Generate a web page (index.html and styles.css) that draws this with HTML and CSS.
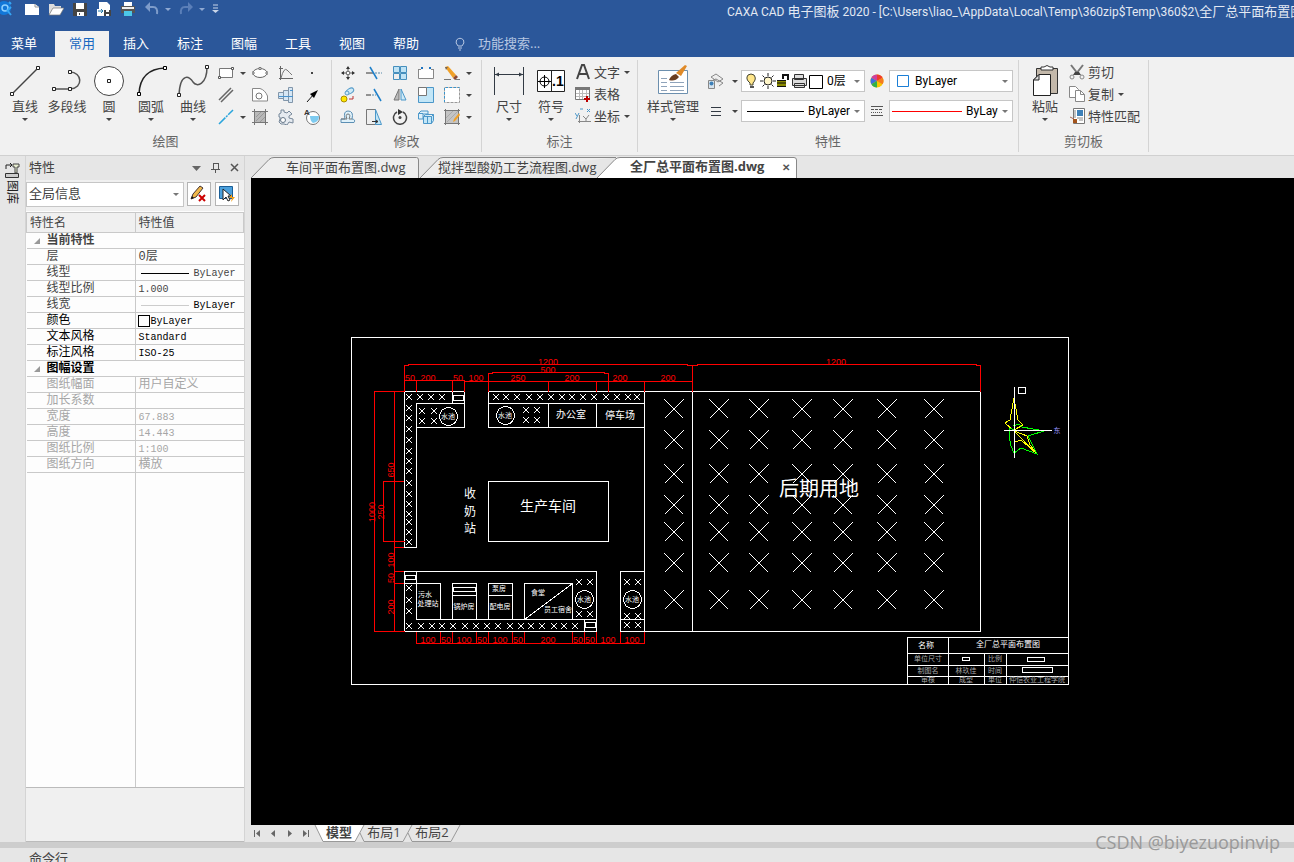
FILE: index.html
```html
<!DOCTYPE html>
<html lang="zh-CN">
<head>
    <meta charset="UTF-8">
    <meta name="viewport" content="width=device-width, initial-scale=1.0">
    <title>CAXA CAD 电子图板 2020</title>
    <link rel="stylesheet" href="styles.css">
</head>
<body>
    <header class="titlebar">
        <div class="title-row">
            <div class="quick">
                <svg class="logo" width="16" height="16" viewBox="0 0 16 16"><circle cx="4" cy="7" r="7" fill="#1277d8"/><circle cx="5" cy="7" r="3" fill="none" stroke="#8fd0ff" stroke-width="1.5"/><path d="M7 9l4 5M9 1l2 2M11 6l-3 3" stroke="#35a6f5" stroke-width="2"/></svg>
                <button class="q" aria-label="新建"><svg width="16" height="16"><path d="M1 3h10l4 3v8H1z" fill="#fff"/><path d="M11 3v3h4" fill="none" stroke="#999"/></svg></button>
                <button class="q" aria-label="打开"><svg width="16" height="16"><path d="M1 13V3h5l1 2h6v2" fill="#ddd"/><path d="M1 14l4-7h11l-4 7z" fill="#fff" stroke="#777" stroke-width=".7"/></svg></button>
                <button class="q" aria-label="保存"><svg width="16" height="16"><path d="M1 2h14v13H1z" fill="#444"/><path d="M4 2h8v6H4zM5 11h7v4H5z" fill="#fff"/><path d="M7 12h1v2H7z" fill="#444"/></svg></button>
                <button class="q" aria-label="另存为"><svg width="16" height="16"><path d="M3 1h8l3 3v11H1V8h2z" fill="#fff"/><path d="M2 10h5M5 8l2 2-2 2" stroke="#27a" fill="none"/><path d="M8 9h7v6H8z" fill="#444"/><path d="M10 9h3v2h-3zM10 13h3v2h-3z" fill="#fff"/></svg></button>
                <button class="q" aria-label="打印"><svg width="16" height="16"><path d="M4 1h8v4H4z" fill="#fff"/><path d="M1 5h14v7H1z" fill="#555"/><path d="M2 6h12v2H2z" fill="#eee"/><path d="M4 10h8v5H4z" fill="#4cc8e8"/></svg></button>
                <button class="q" aria-label="撤销"><svg width="16" height="16"><path d="M2 6h7q5 0 4 7" fill="none" stroke="#7e9cca" stroke-width="2"/><path d="M6 1v10L1 6z" fill="#7e9cca"/></svg></button>
                <i class="arrow pale"></i>
                <button class="q" aria-label="重做"><svg width="16" height="16"><path d="M14 6H7Q2 6 3 13" fill="none" stroke="#5b7fb8" stroke-width="2"/><path d="M10 1v10l5-5z" fill="#5b7fb8"/></svg></button>
                <i class="arrow pale"></i>
                <button class="more" aria-label="自定义"><svg width="8" height="10"><path d="M1 1h5M1 4h5" stroke="#c9d5e8"/><path d="M0 6h7L3.500 9z" fill="#c9d5e8"/></svg></button>
            </div>
            <div class="title">CAXA CAD <span>电子图板</span> 2020 - [C:\Users\liao_\AppData\Local\Temp\360zip$Temp\360$2\<span>全厂总平面布置图</span>.dwg]</div>
        </div>
        <nav class="menu">
            <button>菜单</button>
            <button class="active">常用</button>
            <button>插入</button>
            <button>标注</button>
            <button>图幅</button>
            <button>工具</button>
            <button>视图</button>
            <button>帮助</button>
            <label class="search">
                <svg width="12" height="14" viewBox="0 0 12 14"><path d="M4 9Q1 6 2.500 3Q6-.5 9.500 3Q11 6 8 9z" fill="none" stroke="#b7c7e2"/><path d="M4 11h4M5 13h2" stroke="#b7c7e2"/></svg>
                <input type="text" placeholder="功能搜索...">
            </label>
        </nav>
    </header>

    <div class="ribbon">
        <section class="group draw">
            <div class="tools">
                <button class="big"><svg width="32" height="34"><path d="M3 30L29 4" stroke="#444" stroke-width="1.500"/><path d="M1.500 28.500h3v3h-3zM27.500 2.500h3v3h-3z" fill="#fff" stroke="#222"/></svg>直线<i class="arrow"></i></button>
                <button class="big"><svg width="32" height="34"><path d="M3 25h16c14-1 12-17 0-17" fill="none" stroke="#555" stroke-width="1.500"/><path d="M1.500 23.500h3v3h-3zM17.500 23.500h3v3h-3zM17.500 6.500h3v3h-3z" fill="#fff" stroke="#222"/></svg>多段线</button>
                <button class="big"><svg width="32" height="34"><circle cx="16" cy="17" r="14.500" fill="#fff" stroke="#444"/><path d="M14.500 15.500h3v3h-3z" fill="#fff" stroke="#222"/></svg>圆<i class="arrow"></i></button>
                <button class="big"><svg width="32" height="34"><path d="M4 30Q5 5 30 4" fill="none" stroke="#222" stroke-width="1.500"/><path d="M2.500 28.500h3v3h-3zM28.500 2.500h3v3h-3z" fill="#fff" stroke="#000"/></svg>圆弧<i class="arrow"></i></button>
                <button class="big"><svg width="32" height="34"><path d="M2 31C3 8 13 12 16 18C20 24 30 20 30 3" fill="none" stroke="#555" stroke-width="1.500"/><path d="M.5 29.500h3v3h-3zM28.500 1.500h3v3h-3z" fill="#fff" stroke="#222"/></svg>曲线<i class="arrow"></i></button>
                <div class="icons draw-icons">
                    <span><button aria-label="矩形"><svg width="16" height="16"><path d="M1.500 3.500h13v9h-13z" fill="#fff" stroke="#777"/><path d="M.5 11.500h2v2h-2zM13.500 2.500h2v2h-2z" fill="#fff" stroke="#555"/></svg></button><i class="arrow"></i></span>
                    <span><button aria-label="椭圆"><svg width="16" height="16"><ellipse cx="8" cy="8" rx="7" ry="4.500" fill="#fff" stroke="#666"/><path d="M7 2.500h2v2H7zM0 7h2v2H0zM14 7h2v2h-2z" fill="#fff" stroke="#777"/></svg></button></span>
                    <span><button aria-label="公式曲线"><svg width="16" height="16"><path d="M2.500 1v14M1 13.500h14M1 3.500h4" stroke="#666" fill="none"/><path d="M3 13Q6 2 9 5T14 10" fill="none" stroke="#777"/></svg></button></span>
                    <span><button aria-label="点"><svg width="16" height="16"><path d="M7 7h2v2H7z" fill="#444"/></svg></button></span>
                    <span><button aria-label="平行线"><svg width="16" height="16"><path d="M1 13L13 1M3 15L15 3" stroke="#666" stroke-width="1.500"/></svg></button></span>
                    <span><button aria-label="轮廓"><svg width="16" height="16"><path d="M.5 1.500H8Q13 3 15.500 9v5H.5z" fill="#fff" stroke="#888"/><circle cx="7" cy="9" r="3" fill="#fff" stroke="#777"/></svg></button></span>
                    <span><button aria-label="轴"><svg width="16" height="16"><path d="M.5 5.500h5v6h-5zM5.500 3.500h5v10h-5zM10.500.500h4v15h-4z" fill="#d6e7f5" stroke="#8296aa"/><path d="M1 9.500h14M12 3.500h3" stroke="#4a93cd"/></svg></button></span>
                    <span><button aria-label="箭头"><svg width="16" height="16"><path d="M3 15l7-8" stroke="#111"/><path d="M14 3L6 7l4 4z" fill="#000"/></svg></button></span>
                    <span><button aria-label="中心线"><svg width="16" height="16"><path d="M1 15L15 1" stroke="#2aa5dc" stroke-width="1.500" stroke-dasharray="9 1 2 1"/></svg></button><i class="arrow"></i></span>
                    <span><button aria-label="填充"><svg width="16" height="16"><path d="M3 3h10v10H3z" fill="#b8b8b8"/><path d="M2.500 0v16M13.500 0v16M0 2.500h16M0 13.500h16" stroke="#777"/><path d="M4 8l5-5M4 12l9-9M8 13l5-5" stroke="#999"/></svg></button></span>
                    <span><button aria-label="齿轮"><svg width="16" height="16"><path d="M3 1h3v2l3 1 2-2 3 3-3 2v2l4 1v4l-4-1-2 3-3-1H3l-2-2 1-3V8H1V5l2-1z" fill="#e5eaf0" stroke="#77889a"/><circle cx="5" cy="11" r="2.500" fill="#fff" stroke="#678"/></svg></button></span>
                    <span><button aria-label="局部放大"><svg width="16" height="16"><circle cx="9" cy="9" r="6.500" fill="#fff" stroke="#777"/><path d="M6 7h9q0 6-6 7-3-2-3-7z" fill="#7ecbf0"/><text x="0" y="6" class="icon-a">A</text></svg></button></span>
                </div>
            </div>
            <h2>绘图</h2>
        </section>

        <section class="group modify">
            <div class="tools">
                <div class="icons modify-icons">
                    <span><button aria-label="平移"><svg width="16" height="16"><path d="M8 2v12M2 8h12" stroke="#555" stroke-dasharray="4 4"/><path d="M8 1l2 3H6zM8 15l2-3H6zM1 8l3-2v4zM15 8l-3-2v4z" fill="#333"/><path d="M6.500 6.500h3v3h-3z" fill="#fff" stroke="#777"/></svg></button></span>
                    <span><button aria-label="裁剪"><svg width="16" height="16"><path d="M0 8h7" stroke="#333"/><path d="M9 8h7" stroke="#58a" stroke-dasharray="2 1"/><path d="M4 2l7 12" stroke="#1d7fc9" stroke-width="1.500"/></svg></button></span>
                    <span><button aria-label="阵列"><svg width="16" height="16"><path d="M1.500 1.500h6v6h-6zM8.500 1.500h6v6h-6zM1.500 8.500h6v6h-6zM8.500 8.500h6v6h-6z" fill="#bfe3f5" stroke="#458fbd"/><path d="M2 9h5v5H2z" fill="#eee"/></svg></button></span>
                    <span><button aria-label="打断"><svg width="16" height="16"><path d="M.5 4.500v9h15v-9M0 4.500h3M13 4.500h3" fill="#fff" stroke="#888"/><path d="M3 2h2v2H3zM11 2h2v2h-2z" fill="#1c73c0"/></svg></button></span>
                    <span><button aria-label="删除"><svg width="16" height="16"><path d="M1 2l3-1 8 9-3 3z" fill="#f0a028"/><path d="M9 13l3-3 2 2-3 3z" fill="#8e4a32"/><path d="M1 2l1 3 2-3z" fill="#765"/><path d="M0 14.500h7M11 14.500h5" stroke="#777"/></svg></button><i class="arrow"></i></span>
                    <span><button aria-label="平移复制"><svg width="16" height="16"><circle cx="4" cy="12" r="3" fill="#ffe600" stroke="#a98d00"/><ellipse cx="10" cy="4" rx="4" ry="2.500" transform="rotate(-30 10 4)" fill="#cfeaf7" stroke="#579cc9"/><circle cx="7" cy="6" r="2" fill="#cfeaf7" stroke="#579cc9"/><path d="M9 12h4V9" fill="none" stroke="#b33"/></svg></button></span>
                    <span><button aria-label="延伸"><svg width="16" height="16"><path d="M0 8h5" stroke="#333"/><path d="M6 8h4" stroke="#58a" stroke-dasharray="2 1"/><path d="M8 2l7 12" stroke="#1d7fc9" stroke-width="1.500"/></svg></button></span>
                    <span><button aria-label="镜像"><svg width="16" height="16"><path d="M7 2v11H2z" fill="#bbb" stroke="#777"/><path d="M9 2v11h5z" fill="#cfeaf7" stroke="#4b97c9"/></svg></button></span>
                    <span><button aria-label="缩放"><svg width="16" height="16"><path d="M.5.5h15v15H.5z" fill="#c2e6f7" stroke="#4b97c9"/><path d="M.5.5h8v8h-8z" fill="#fff" stroke="#777"/></svg></button></span>
                    <span><button aria-label="拉伸"><svg width="16" height="16"><path d="M.5.500h15v15H.5z" fill="#fff" stroke="#999" stroke-dasharray="3 1"/><path d="M.5 15V.5h15" fill="none" stroke="#3695cf" stroke-dasharray="2 2"/></svg></button><i class="arrow"></i></span>
                    <span><button aria-label="等距线"><svg width="16" height="16"><path d="M1 13.500h13q2-3-2-3.500 2-8-4-8-5 0-3 8H1z" fill="#dff1fa" stroke="#5c8fb4"/><path d="M1 10h6q-2-5 1-5 3 0 1 5h3" fill="none" stroke="#777"/></svg></button></span>
                    <span><button aria-label="拉长"><svg width="16" height="16"><path d="M.5.500h9v15h-9z" fill="#eee" stroke="#777"/><path d="M9.500.500l6 15h-6z" fill="#c2e6f7" stroke="#4b97c9"/><path d="M6 12.500h6M10 11l2 1.500-2 1.500" fill="none" stroke="#333"/></svg></button></span>
                    <span><button aria-label="旋转"><svg width="16" height="16"><path d="M5 3A6.500 6.500 0 1 0 11 3" fill="none" stroke="#444" stroke-width="1.500"/><path d="M6 0l5 3-5 3z" fill="#333"/><circle cx="8" cy="8.500" r="1.500" fill="#444"/></svg></button></span>
                    <span><button aria-label="三维"><svg width="16" height="16"><path d="M.5 4.500L3 2h7v3H5v5H.5zM.5 4.500H5" fill="#dff1fa" stroke="#4b97c9"/><path d="M5.500 7.500l2-2h8v6l-2 3h-8zM5.500 7.500h8l2-2M13.500 7.500v7M9.500 7.500v7" fill="#c2e6f7" stroke="#4b97c9"/></svg></button></span>
                    <span><button aria-label="编辑填充"><svg width="16" height="16"><path d="M2 2h12v12H2z" fill="#c4c4c4"/><path d="M1.500 0v16M14.500 0v16M0 1.500h16M0 14.500h16" stroke="#777"/><path d="M2 9l7-7M3 13L14 2" stroke="#aaa"/><path d="M9 13l1-3 5-6 1 2-5 6z" fill="#f0a028"/></svg></button><i class="arrow"></i></span>
                </div>
            </div>
            <h2>修改</h2>
        </section>

        <section class="group note">
            <div class="tools">
                <button class="big"><svg width="32" height="34"><path d="M1.500 3v28M30.500 3v28M2 10.500h28" stroke="#333b44"/><path d="M2 10.500l4-2v4zM30 10.500l-4-2v4z" fill="#333b44"/></svg>尺寸<i class="arrow"></i></button>
                <button class="big"><svg width="32" height="34"><path d="M2.500 6.500h27v21h-27zM16.500 6v22" fill="#fff" stroke="#222"/><circle cx="9.500" cy="17.500" r="4.500" fill="none" stroke="#000"/><path d="M3 17.500h13M9.500 11v13" stroke="#000"/><text x="17" y="22" class="icon-num">.1</text></svg>符号<i class="arrow"></i></button>
                <div class="rows">
                    <button class="row"><svg width="16" height="16"><path d="M2 15L7 1h2l5 14M4.500 10h7" fill="none" stroke="#444" stroke-width="2"/></svg>文字<i class="arrow"></i></button>
                    <button class="row"><svg width="16" height="16"><path d="M.5 1.500h14v12H.5z" fill="#fff" stroke="#777"/><path d="M0 1h15v3H0z" fill="#777"/><path d="M1 7.500h13M1 10.500h13M4.500 4v9M7.500 4v9M11.500 4v9" stroke="#bbb"/><path d="M12 10v6M9 13h6" stroke="#b00" stroke-width="2"/></svg>表格</button>
                    <button class="row"><svg width="16" height="16"><path d="M4.500 15V7M3 13.500h13M8 8l3 3 3-4M11 11v3" fill="none" stroke="#888"/><path d="M0 5l2 3M4 5l-3 6M12 1l3 3M15 1l-3 3M5 1h3" stroke="#4b97c9"/></svg>坐标<i class="arrow"></i></button>
                </div>
            </div>
            <h2>标注</h2>
        </section>

        <section class="group props">
            <div class="tools">
                <button class="big wide"><svg width="32" height="34"><path d="M1.500 6.500h29v23h-29z" fill="#fff" stroke="#6c8fae"/><path d="M4 14.500h6M4 18.500h6M4 22.500h6M4 26.500h6M13 14.500h4M13 18.500h14M13 22.500h14M13 26.500h14" stroke="#8fa3ba"/><path d="M19 9l9-8 2 1-6 10z" fill="#e08a28"/><path d="M12 16q2-5 7-6l3 3q-4 5-10 3z" fill="#6b3d1f"/></svg>样式管理<i class="arrow"></i></button>
                <div class="combos">
                    <div class="combo-row">
                        <button class="side" aria-label="图层"><svg width="16" height="16"><path d="M3 4l5-3 7 5-5 3zM5 7l3-1 7 4-4 3" fill="#eee" stroke="#888"/><path d="M.5 7.500h6v8h-6z" fill="#d8e4ee" stroke="#888"/><circle cx="3.500" cy="10.500" r="2" fill="#3d80b8"/></svg></button><i class="arrow"></i>
                        <div class="combo">
                            <svg width="80" height="18">
                                <path d="M9 13V11Q4 7 7 3Q10 1 13 3Q16 7 12 11v2z" transform="translate(-2 0)" fill="#ffe68a" stroke="#443"/><path d="M7 14h4v2H7z" fill="#555"/>
                                <circle cx="25" cy="9" r="4" fill="#fff6c8" stroke="#222"/><path d="M25 1v3M25 14v3M17 9h3M30 9h3M19.500 3.500l2 2M30.500 3.500l-2 2M19.500 14.500l2-2M30.500 14.500l-2-2" stroke="#222"/>
                                <path d="M34 8h9v7h-9z" fill="#8a8a00"/><path d="M34 8.500h9M34 11h9M34 14.500h9" stroke="#111"/><path d="M40 7V3h5v5" fill="none" stroke="#111" stroke-width="2"/>
                                <path d="M51.500 2.500h9v5h-9zM49.500 6.500h14v7h-14zM51.500 11.500h10v4h-10z" fill="#ddd" stroke="#333"/>
                                <path d="M66.500 3.500h13v13h-13z" fill="#fff" stroke="#000"/>
                            </svg>
                            <select aria-label="图层"><option>0层</option></select><i class="arrow grey"></i>
                        </div>
                        <button class="side wheel" aria-label="颜色"><svg width="14" height="14" viewBox="0 0 14 14"><circle cx="7" cy="7" r="6.500" fill="#f7c600"/><path d="M7 7V.5A6.500 6.500 0 0 0 1.400 3.800z" fill="#d0409c"/><path d="M7 7V.5A6.500 6.500 0 0 1 12.600 3.800z" fill="#f03a2e"/><path d="M7 7l5.600-3.200a6.500 6.500 0 0 1 0 6.500z" fill="#f47b20"/><path d="M7 7L1.400 3.800a6.500 6.500 0 0 0 0 6.500z" fill="#3d6fe0"/><path d="M7 7l-5.600 3.200A6.500 6.500 0 0 0 7 13.500z" fill="#2fb04a"/></svg></button>
                        <div class="combo">
                            <svg width="20" height="18"><path d="M6.500 3.500h11v11h-11z" fill="#fff" stroke="#1b7fd6"/></svg>
                            <select aria-label="颜色"><option>ByLayer</option></select><i class="arrow grey"></i>
                        </div>
                    </div>
                    <div class="combo-row">
                        <button class="side" aria-label="线宽"><svg width="16" height="16"><path d="M3 4.500h10M3 8.500h10M3 12.500h10" stroke="#333a44"/></svg></button><i class="arrow"></i>
                        <div class="combo">
                            <svg width="61" height="18"><path d="M4 9h57v1H4z" fill="#000"/></svg>
                            <select aria-label="线宽"><option>ByLayer</option></select><i class="arrow grey"></i>
                        </div>
                        <button class="side wheel" aria-label="线型"><svg width="14" height="14"><path d="M1 2.500h12M1 11.500h12" stroke="#555"/><path d="M1 5.500h12" stroke="#555" stroke-dasharray="3 1"/><path d="M1 8.500h12" stroke="#555" stroke-dasharray="1 1"/></svg></button>
                        <div class="combo">
                            <svg width="71" height="18"><path d="M1 9h70v1H1z" fill="#f00"/></svg>
                            <select aria-label="线型"><option>ByLayer</option></select><i class="arrow grey"></i>
                        </div>
                    </div>
                </div>
            </div>
            <h2>特性</h2>
        </section>

        <section class="group clip">
            <div class="tools">
                <button class="big"><svg width="32" height="34"><path d="M7.500 4.500h21v25h-21z" fill="#c3b8aa" stroke="#333"/><path d="M12 6V3h3q3-3 6 0h3v3z" fill="#fff" stroke="#333"/><path d="M10 10.500h11.500v21h-17V16z" fill="#fff" stroke="#222"/><path d="M10 10.500V16H4.500z" fill="#ddd" stroke="#222"/></svg>粘贴<i class="arrow"></i></button>
                <div class="rows">
                    <button class="row"><svg width="16" height="16"><path d="M2 1l7 9M14 1l-7 9" stroke="#777" stroke-width="2"/><path d="M6 8h4l2 3H4z" fill="#444"/><circle cx="3" cy="13" r="2" fill="none" stroke="#888"/><circle cx="13" cy="13" r="2" fill="none" stroke="#888"/></svg>剪切</button>
                    <button class="row"><svg width="16" height="16"><path d="M.5.500h6l3 3v8h-9z" fill="#fff" stroke="#888"/><path d="M6.500 4.500h5l4 4v7h-9z" fill="#fff" stroke="#888"/><path d="M11.500 4.500v4h4" fill="none" stroke="#888"/></svg>复制<i class="arrow"></i></button>
                    <button class="row"><svg width="16" height="16"><path d="M4.500.500h11v15h-11z" fill="#fff" stroke="#777"/><path d="M8 2h6v6H8z" fill="#3d80b8"/><path d="M6 2v8M8 10h6M10 12h4" stroke="#888"/><path d="M1 9l4 2" stroke="#a65"/><path d="M4 11h4v4H4z" fill="#a3541c"/></svg>特性匹配</button>
                </div>
            </div>
            <h2>剪切板</h2>
        </section>
    </div>

    <main class="work">
        <aside class="dock">
            <button class="dock-tab"><svg width="16" height="16"><path d="M2 7V3h6M6 1l2 2-2 2" fill="none" stroke="#222"/><path d="M9 2h6v3h-2v6h-2V5H9z" fill="#e7edd0" stroke="#444"/><path d="M1.500 11.500h13v4h-13z" fill="#ccc" stroke="#333"/></svg><span>图库</span></button>
        </aside>

        <aside class="panel">
            <div class="panel-head">
                <h3>特性</h3>
                <button aria-label="菜单"><svg width="10" height="10"><path d="M0 3h9L4.500 8z" fill="#666"/></svg></button>
                <button aria-label="固定"><svg width="10" height="10"><path d="M2.500 0v6M7.500 0v6M2 .5h6M0 6.500h9M4.500 7v3" stroke="#555" fill="none"/></svg></button>
                <button aria-label="关闭"><svg width="10" height="10"><path d="M1 1l7 7M8 1L1 8" stroke="#555" stroke-width="1.500"/></svg></button>
            </div>
            <div class="panel-tools">
                <div class="combo scope"><select aria-label="对象"><option>全局信息</option></select><i class="arrow grey"></i></div>
                <button class="tool" aria-label="清除选择"><svg width="18" height="18"><path d="M1 14l2-5 7-8 3 2-7 9z" fill="#f0b84a" stroke="#433"/><path d="M1 14l1-3 2 2z" fill="#111"/><path d="M9 10l6 6M15 10l-6 6" stroke="#c00" stroke-width="2"/></svg></button>
                <button class="tool" aria-label="快速选择"><svg width="18" height="18"><path d="M1.500 1.500h13v12h-13z" fill="#4ba0dc" stroke="#1b5e96"/><path d="M5 4v11l3-3 2 4 2-1-2-4h3z" fill="#fff" stroke="#222"/><path d="M14 9l-3 4h3l-1 4 4-5h-3z" fill="#f5a018"/></svg></button>
            </div>
            <div class="sheet">
                <table>
                    <thead>
                        <tr><th>特性名</th><th>特性值</th></tr>
                    </thead>
                    <tbody>
                        <tr class="section"><td colspan="2"><svg width="6" height="6"><path d="M6 0v6H0z" fill="#999"/></svg>当前特性</td></tr>
                        <tr><td>层</td><td class="zh">0层</td></tr>
                        <tr><td>线型</td><td><span class="line dark"></span>ByLayer</td></tr>
                        <tr><td>线型比例</td><td>1.000</td></tr>
                        <tr><td>线宽</td><td class="ink"><span class="line"></span>ByLayer</td></tr>
                        <tr class="ink"><td>颜色</td><td><span class="box"></span>ByLayer</td></tr>
                        <tr class="ink"><td>文本风格</td><td>Standard</td></tr>
                        <tr class="ink"><td>标注风格</td><td>ISO-25</td></tr>
                        <tr class="section ink"><td colspan="2"><svg width="6" height="6"><path d="M6 0v6H0z" fill="#999"/></svg>图幅设置</td></tr>
                        <tr class="off"><td>图纸幅面</td><td class="zh">用户自定义</td></tr>
                        <tr class="off"><td>加长系数</td><td></td></tr>
                        <tr class="off"><td>宽度</td><td>67.883</td></tr>
                        <tr class="off"><td>高度</td><td>14.443</td></tr>
                        <tr class="off"><td>图纸比例</td><td>1:100</td></tr>
                        <tr class="off"><td>图纸方向</td><td class="zh">横放</td></tr>
                        <tr class="rest"><td></td><td></td></tr>
                    </tbody>
                </table>
            </div>
            <div class="hint"></div>
        </aside>

        <section class="docs">
            <div class="doc-tabs">
                <button class="doc"><svg width="168" height="21"><path d="M0 21L18 2.500Q20 .5 23 .5H165.500Q167.500 .5 167.500 3V21" fill="#eee" stroke="#888"/></svg>车间平面布置图.dwg</button>
                <button class="doc second"><svg width="196" height="21"><path d="M0 21L18 2.500Q20 .5 23 .5H196" fill="#eee" stroke="#888"/></svg>搅拌型酸奶工艺流程图.dwg</button>
                <button class="doc current"><svg width="200" height="21"><path d="M0 21L18 2.500Q20 .5 23 .5H197Q199.500 .5 199.500 3V21" fill="#fff" stroke="#888"/></svg>全厂总平面布置图.dwg<span class="close">✕</span></button>
            </div>
            <div class="canvas">
                <svg class="plan" viewBox="251 178 1043 647" preserveAspectRatio="xMinYMin meet">
                    <defs>
                        <marker id="x" markerUnits="userSpaceOnUse" markerWidth="8" markerHeight="8" refX="4" refY="4"><path d="M1 1l6 6M7 1L1 7" class="cross"/></marker>
                        <marker id="xx" markerUnits="userSpaceOnUse" markerWidth="20" markerHeight="20" refX="10" refY="10"><path d="M.5 .5l19 19M19.500 .5L.5 19.500" class="cross"/></marker>
                    </defs>

                    <!-- 图框与厂区边界 -->
                    <g class="white">
                        <path d="M351.500 337.500h717v347h-717z"/>
                        <path d="M404.500 547.500v-156h60v36h-48v-24h48M416.500 403.500v144h-12M452.500 391.500v12M453.500 395.500h10v5h-10z"/>
                        <path d="M488.500 391.500h492v240h-360v-60h24M644.500 391.500v240M692.500 391.500v240M488.500 391.500v36h156M488.500 403.500h156M548.500 403.500v24M596.500 403.500v24M620.500 619.500h24"/>
                        <path d="M488.500 481.500h120v60h-120z"/>
                        <path d="M404.500 571.500h192v60h-192zM416.500 571.500v48h180M404.500 583.500h36v36M405.500 575.500h10v4h-10z"/>
                        <path d="M452.500 619.500v-36h24v36M453.500 587.500h22v4h-22zM452.500 595.500h24M488.500 619.500v-36h24v36M488.500 595.500h24M524.500 619.500v-36h48v36M524.500 619.500l48-36M584.500 619.500v12M585.500 622.500h10v5h-10z"/>
                        <circle cx="448.500" cy="416.500" r="9"/><circle cx="505.500" cy="415.500" r="9"/><circle cx="584.500" cy="599.500" r="9"/><circle cx="632.500" cy="599.500" r="9"/>
                        <path d="M907.500 684.500v-47h161M907.500 653.500h161M907.500 665.500h161M907.500 676.500h161M948.500 637.500v47M984.500 653.500v31M1006.500 653.500v31M962.500 657.500h7v3h-7zM1027.500 657.500h17v4h-17zM1022.500 667.500h30v5h-30z"/>
                    </g>

                    <!-- 绿化 -->
                    <path class="trees" d="M409 397H420H431H442M409 408V418V429V440V451V461V471V483V494V504V514V522V532V542M422 411H434M422 421H434M496 397H506H517H529H540H551H562H572H583H594H606H617H628H637M526 410H537M526 420H537"/>
                    <path class="trees" d="M409 588V600V611V626H421H432H442H453H465H476H487H498H510H521H531H542H554H564H575M579 582H590M579 614H590M627 582H638M627 616H638M627 625H638"/>
                    <path class="big-trees" d="M674 409V440V474V505V532V563V600M719 409V440V474V505V532V563V600M759 409V440V474V505V532V563V600M802 409V440V474V505V532V563V600M843 409V440V474V505V532V563V600M887 409V440V474V505V532V563V600M934 409V440V474V505V532V563V600"/>

                    <!-- 尺寸标注 -->
                    <g class="red">
                        <path d="M404.500 391.500v-26h4v-1h279v1h10v-1h279v1h4v26M692.500 365.500v26M488.500 391.500v-18h4v-1h112v1h4v18"/>
                        <path d="M404.500 380.500h60M464.500 381.500h228M416.500 380.500v11M452.500 380.500v11M464.500 380.500v11M548.500 380.500v11M596.500 380.500v11M644.500 380.500v11"/>
                        <path d="M404 391.500h-29.500v240h30M404 481.500h-20.500v60h21M394.500 391.500v240M394 547.500h10M394 571.500h10M394 583.500h10"/>
                        <path d="M416.500 631.500v12h228v-12M440.500 631.500v12M452.500 631.500v12M476.500 631.500v12M488.500 631.500v12M512.500 631.500v12M524.500 631.500v12M572.500 631.500v12M584.500 631.500v12M596.500 631.500v12M620.500 631.500v12"/>
                    </g>
                    <g class="dim">
                        <text x="548" y="365">1200</text><text x="836" y="365">1200</text><text x="548" y="373">500</text>
                        <text x="410" y="381">50</text><text x="428" y="381">200</text><text x="458" y="381">50</text><text x="476" y="381">100</text><text x="518" y="381">250</text><text x="572" y="381">200</text><text x="620" y="381">200</text><text x="668" y="381">200</text>
                        <text transform="translate(375 512) rotate(-90)">1000</text><text transform="translate(384 512) rotate(-90)">250</text><text transform="translate(394 470) rotate(-90)">650</text><text transform="translate(394 560) rotate(-90)">100</text><text transform="translate(394 578) rotate(-90)">50</text><text transform="translate(394 607) rotate(-90)">200</text>
                        <text x="428" y="643">100</text><text x="446" y="643">50</text><text x="464" y="643">100</text><text x="482" y="643">50</text><text x="500" y="643">100</text><text x="518" y="643">50</text><text x="548" y="643">200</text><text x="578" y="643">50</text><text x="590" y="643">50</text><text x="608" y="643">100</text><text x="632" y="643">100</text>
                    </g>

                    <!-- 房间名称 -->
                    <g class="room">
                        <text x="571" y="418">办公室</text><text x="620" y="419">停车场</text>
                        <text x="548" y="511" class="mid">生产车间</text>
                        <text x="470" y="498" class="gate">收</text><text x="470" y="516" class="gate">奶</text><text x="470" y="533" class="gate">站</text>
                        <text x="819" y="496" class="large">后期用地</text>
                    </g>
                    <g class="room tiny">
                        <text x="448" y="419">水池</text><text x="505" y="418">水池</text><text x="584" y="602">水池</text><text x="632" y="602">水池</text>
                        <text x="425" y="597">污水</text><text x="428" y="606">处理站</text><text x="464" y="609">锅炉房</text><text x="499" y="591">泵房</text><text x="500" y="609">配电房</text><text x="538" y="595">食堂</text><text x="558" y="612">员工宿舍</text>
                        <text x="928" y="661" class="faint">单位尺寸</text><text x="995" y="661" class="faint">比例</text>
                        <text x="928" y="673" class="faint">制图名</text><text x="966" y="673" class="faint">林玖佳</text><text x="995" y="673" class="faint">时间</text>
                        <text x="928" y="682" class="faint">审核</text><text x="966" y="682" class="faint">成型</text><text x="995" y="682" class="faint">单位</text><text x="1037" y="682" class="faint">仲恺农业工程学院</text>
                        <text x="926" y="648" class="name">名称</text><text x="1008" y="647" class="name">全厂总平面布置图</text>
                        <text x="1057" y="433" class="east">东</text>
                    </g>

                    <!-- 风玫瑰 -->
                    <path class="yellow" d="M1014 431l-9-8 5-3 4-22 4 22 5 5-9 5M1014 431l23 23-16-14-6 2-1-11 13 5 3 9 7 9"/>
                    <path class="green" d="M1014 430l-4-2-1 8 2 10 3 7 7-5 16 6-9-18 16-5-22-4-3-3-6 2"/>
                    <path class="white" d="M1014.500 387v71M1004 430.500h48M1018.500 387.500h7v6h-7z"/>
                </svg>
            </div>
            <div class="layouts">
                <button class="step" aria-label="第一个"><svg width="9" height="9"><path d="M1.500 1v7" stroke="#666"/><path d="M7 1v7L3 4.500z" fill="#666"/></svg></button>
                <button class="step" aria-label="上一个"><svg width="9" height="9"><path d="M6 1v7L2 4.500z" fill="#666"/></svg></button>
                <button class="step" aria-label="下一个"><svg width="9" height="9"><path d="M3 1v7l4-3.500z" fill="#666"/></svg></button>
                <button class="step" aria-label="最后一个"><svg width="9" height="9"><path d="M7.500 1v7" stroke="#666"/><path d="M2 1v7l4-3.500z" fill="#666"/></svg></button>
                <button class="layout current"><svg width="50" height="17"><path d="M0 0l8 16.500h32L49 0" fill="#fff" stroke="#999"/></svg>模型</button>
                <button class="layout"><svg width="50" height="17"><path d="M-3 8l4 8.500h39L49 0" fill="none" stroke="#999"/></svg>布局1</button>
                <button class="layout"><svg width="50" height="17"><path d="M-3 8l4 8.500h39L49 0" fill="none" stroke="#999"/></svg>布局2</button>
            </div>
        </section>
    </main>

    <footer class="command">命令行</footer>
    <div class="watermark">CSDN @biyezuopinvip</div>
</body>
</html>
```
FILE: styles.css
```css
* {
    margin: 0;
    padding: 0;
    box-sizing: border-box;
}

body {
    font-family: "Open Sans", "Noto Sans CJK SC", sans-serif;
    font-size: 13px;
    line-height: 16px;
    color: #444;
    background: #e6e6e6;
    height: 100vh;
    display: flex;
    flex-direction: column;
    overflow: hidden;
    position: relative;
}

button,
select,
input {
    font: inherit;
    color: inherit;
    background: none;
    border: none;
    outline: none;
}

svg {
    display: block;
    flex: none;
}

h2,
h3 {
    font-size: 13px;
    font-weight: normal;
}

.arrow {
    flex: none;
    width: 5px;
    border: 3px solid transparent;
    border-width: 3px 3px 0;
    border-top-color: #444;
}

.arrow.pale {
    margin: 0 -1px 0 -3px;
    border-top-color: #8fa9d2;
}

.arrow.grey {
    margin-left: 4px;
    border-top-color: #777;
}

/* 标题栏 */
.titlebar {
    background: #2b579a;
    color: #fff;
}

.title-row {
    display: flex;
    justify-content: space-between;
    height: 31px;
}

.quick {
    display: flex;
    align-items: center;
    height: 18px;
    gap: 8px;
}

.title {
    width: 567px;
    padding-top: 4px;
    font-family: "Roboto", "Noto Sans CJK SC", sans-serif;
    font-size: 12px;
    color: #e3e9f3;
    white-space: nowrap;
    overflow: hidden;
}

.title span {
    font-size: 13px;
}

.menu {
    display: flex;
    height: 26px;
    padding-left: 1px;
}

.menu button {
    width: 54px;
    padding: 0 8px 2px 0;
}

.menu .active {
    background: #f1f1f1;
    color: #1668c1;
    padding-right: 0;
}

.menu .active ~ button {
    padding-right: 0;
}

.search {
    display: flex;
    align-items: center;
    gap: 12px;
    margin-left: 21px;
}

.search input {
    width: 100px;
    padding-bottom: 2px;
}

.search input::placeholder {
    color: #b7c7e2;
    opacity: 1;
}

/* 功能区 */
.ribbon {
    display: flex;
    height: 99px;
    background: #f1f1f1;
    border-bottom: 1px solid #d0d0d0;
}

.group {
    display: flex;
    flex-direction: column;
    margin: 3px 0;
    border-right: 1px solid #d4d4d4;
}

.group h2 {
    text-align: center;
    color: #666;
    padding-bottom: 3px;
}

.tools {
    flex: 1;
    display: flex;
    align-items: flex-start;
    padding: 2px 5px 0 4px;
}

.big {
    width: 42px;
    display: flex;
    flex-direction: column;
    align-items: center;
    padding-top: 2px;
    white-space: nowrap;
}

.big .arrow {
    margin-top: 4px;
}

.wide {
    width: 62px;
}

.icons {
    display: grid;
    grid-auto-rows: 22px;
}

.draw-icons {
    grid-template-columns: 34px 26px 26px 26px;
}

.modify-icons {
    grid-template-columns: 26px 26px 26px 26px 37px;
}

.icons span {
    display: flex;
    align-items: center;
    padding-left: 4px;
    gap: 6px;
}

.modify .tools {
    padding-right: 4px;
}

.note .tools {
    padding-left: 6px;
    padding-right: 7px;
}

.icon-a {
    font: 700 8px "Liberation Sans", sans-serif;
    fill: #333;
}

.icon-num {
    font: 700 14px "Liberation Sans", sans-serif;
    fill: #000;
}

.rows {
    display: flex;
    flex-direction: column;
    padding-left: 3px;
}

.row {
    display: flex;
    align-items: center;
    gap: 3px;
    height: 22px;
    padding-bottom: 2px;
}

.row .arrow {
    margin-left: 1px;
}

.combos {
    display: flex;
    flex-direction: column;
    gap: 8px;
    padding: 8px 0 0 4px;
}

.combo-row {
    display: flex;
    align-items: center;
}

.combo-row > .arrow {
    margin: 0 3px 0 8px;
}

.combo {
    display: flex;
    align-items: center;
    width: 124px;
    height: 22px;
    padding: 0 4px 0 1px;
    background: #fff;
    border: 1px solid #c6c6c6;
}

.combo select {
    flex: 1;
    min-width: 0;
    padding-left: 4px;
    font-family: "Roboto", "Noto Sans CJK SC", sans-serif;
    font-size: 12px;
    color: #000;
    appearance: none;
}

.wheel {
    padding: 0 5px;
}

.clip .tools {
    padding-right: 8px;
    padding-left: 5px;
}

/* 工作区 */
.work {
    flex: 1;
    min-height: 0;
    display: flex;
    border-bottom: 6px solid #cdcdcd;
}

.dock {
    width: 25px;
    padding: 6px 0 0 4px;
}

.dock-tab span {
    writing-mode: vertical-rl;
    text-orientation: sideways;
    margin-top: 2px;
    font-size: 12px;
    color: #222;
}

.panel {
    width: 220px;
    display: flex;
    flex-direction: column;
    border-left: 1px solid #d4d4d4;
    border-right: 1px solid #d4d4d4;
    margin-right: 6px;
}

.panel-head {
    display: flex;
    align-items: center;
    gap: 9px;
    height: 24px;
    padding: 0 4px 0 3px;
}

.panel-head h3 {
    flex: 1;
    padding-bottom: 2px;
}

.panel-tools {
    display: flex;
    gap: 3px;
    height: 31px;
    padding: 2px 0 0;
    background: #f0f0f0;
}

.scope {
    width: 158px;
    height: 25px;
}

.scope select {
    font-size: 13px;
    color: #444;
    padding: 0 0 2px 1px;
}

.tool {
    width: 24px;
    height: 24px;
    padding: 2px;
    background: #fff;
    border: 1px solid #b4b4b4;
}

.tool + .tool {
    margin-left: 1px;
}

.sheet {
    flex: 1;
    min-height: 0;
    padding-top: 1px;
    background: #fdfdfd;
    border-bottom: 1px solid #bbb;
}

.sheet table {
    width: 100%;
    height: 100%;
    border-collapse: collapse;
    table-layout: fixed;
    font-family: "Liberation Mono", "Noto Sans CJK SC", monospace;
    font-size: 12px;
    line-height: 13px;
}

.sheet th {
    height: 20px;
    padding: 3px 0 0 3px;
    background: #f0f0f0;
    border: 1px solid #c9c9c9;
    font-weight: normal;
    text-align: left;
}

.sheet td {
    height: 16px;
    padding: 2px 0 0 3px;
    border-bottom: 1px solid #c9c9c9;
    white-space: nowrap;
}

.sheet td + td {
    border-left: 1px solid #c9c9c9;
    font-size: 10px;
}

.sheet td.zh {
    font-size: 12px;
}

.sheet td:first-child {
    padding-left: 20px;
}

.sheet .section td {
    padding-left: 7px;
    font-weight: bold;
}

.section svg {
    display: inline-block;
    margin-right: 7px;
}

.sheet .rest td {
    height: auto;
    border-bottom: none;
}

.ink {
    color: #000;
}

.off {
    color: #a6a6a6;
}

.line {
    display: inline-block;
    width: 48px;
    margin: 0 5px 0 2px;
    border-top: 1px solid #ccc;
    vertical-align: middle;
}

.line.dark {
    border-color: #000;
}

.box {
    display: inline-block;
    width: 12px;
    height: 12px;
    margin: 0 1px 0 -1px;
    border: 1px solid #000;
    vertical-align: middle;
}

.hint {
    height: 54px;
    background: #f0f0f0;
    border-bottom: 1px solid #bbb;
}

.docs {
    flex: 1;
    min-width: 0;
    display: flex;
    flex-direction: column;
}

.doc-tabs {
    display: flex;
    height: 22px;
    padding-top: 1px;
}

.doc {
    position: relative;
    z-index: 0;
    width: 169px;
    padding: 0 0 2px 35px;
    text-align: left;
    white-space: nowrap;
}

.doc svg,
.layout svg {
    position: absolute;
    left: 0;
    top: 0;
    z-index: -1;
    overflow: visible;
}

.doc.second {
    width: 177px;
    padding-left: 18px;
}

.doc.current {
    width: 200px;
    padding-left: 33px;
    font-weight: bold;
}

.close {
    margin-left: 18px;
    font-size: 10px;
    color: #555;
}

.canvas {
    flex: 1;
    min-height: 0;
    background: #000;
}

.plan {
    width: 100%;
    height: 100%;
}

.white,
.red,
.green,
.yellow,
.cross {
    fill: none;
    stroke: #fff;
    shape-rendering: crispEdges;
}

.red {
    stroke: #f00;
}

.green {
    stroke: #0f0;
}

.yellow {
    stroke: #ff0;
}

.trees {
    fill: none;
    marker: url(#x);
}

.big-trees {
    fill: none;
    marker: url(#xx);
}

.dim {
    font: 9px "Liberation Sans", sans-serif;
    fill: #f00;
    text-anchor: middle;
}

.room {
    font: 10px "Noto Sans CJK SC", sans-serif;
    fill: #fff;
    text-anchor: middle;
}

.mid {
    font-size: 14px;
}

.gate {
    font-size: 12px;
}

.large {
    font-size: 20px;
}

.tiny {
    font-size: 7px;
}

.faint {
    fill: #aaa;
}

.name {
    font-size: 8px;
}

.east {
    fill: #99f;
}

.layouts {
    display: flex;
    align-items: center;
    height: 17px;
    padding-left: 2px;
}

.step {
    width: 16px;
}

.layout {
    position: relative;
    z-index: 0;
    width: 48px;
    height: 17px;
    padding: 0 6px 3px 0;
    text-align: center;
    line-height: 14px;
}

.layout.current {
    margin-left: -2px;
    padding-right: 0;
    font-weight: bold;
}

/* 命令行 */
.command {
    height: 14px;
    padding: 2px 0 0 29px;
    overflow: hidden;
}

.watermark {
    position: absolute;
    right: 14px;
    bottom: 8px;
    font-family: "Open Sans", sans-serif;
    font-size: 18px;
    line-height: 24px;
    color: #999;
}
```
